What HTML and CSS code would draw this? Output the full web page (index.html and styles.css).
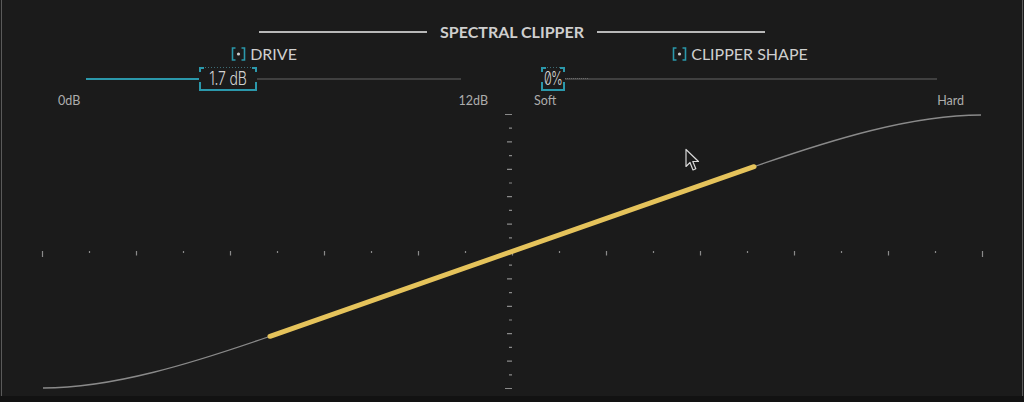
FILE: index.html
```html
<!DOCTYPE html>
<html lang="en">
<head>
    <meta charset="UTF-8">
    <meta name="viewport" content="width=device-width, initial-scale=1.0">
    <title>Spectral Clipper</title>
    <link rel="stylesheet" href="styles.css">
</head>
<body>
    <div class="panel">
        <div class="title-row">
            <span class="rule"></span>
            <h1 class="title">SPECTRAL CLIPPER</h1>
            <span class="rule"></span>
        </div>

        <div class="controls">
            <div class="control">
                <div class="control-label">
                    <svg class="link-icon" width="15" height="14" viewBox="0 0 15 14">
                        <path d="M4.5 1H1.5V13H4.5M10.5 1H13.5V13H10.5" fill="none" stroke="#2b98ab" stroke-width="1.6"/>
                        <circle cx="7.5" cy="7" r="1.6" fill="#cfcfcf"/>
                    </svg>
                    <span>DRIVE</span>
                </div>
                <div class="slider">
                    <div class="track"></div>
                    <div class="fill" style="width: 113px;"></div>
                    <div class="thumb" style="left: 141px; width: 58px;"><span class="value">1.7 dB</span></div>
                </div>
                <div class="scale"><span>0dB</span><span>12dB</span></div>
            </div>

            <div class="control">
                <div class="control-label">
                    <svg class="link-icon" width="15" height="14" viewBox="0 0 15 14">
                        <path d="M4.5 1H1.5V13H4.5M10.5 1H13.5V13H10.5" fill="none" stroke="#2b98ab" stroke-width="1.6"/>
                        <circle cx="7.5" cy="7" r="1.6" fill="#cfcfcf"/>
                    </svg>
                    <span>CLIPPER SHAPE</span>
                </div>
                <div class="slider">
                    <div class="track"></div>
                    <div class="hover-trail"></div>
                    <div class="thumb" style="left: 7px; width: 24px;"><span class="value value-small">0%</span></div>
                </div>
                <div class="scale"><span>Soft</span><span>Hard</span></div>
            </div>
        </div>

        <svg class="graph" width="1020" height="288" viewBox="2 108 1020 288">
            <path id="ticks" d="" fill="none" stroke="#8a8a8a" stroke-width="1.2"/>
            <path class="curve" d="M43 388C113 388 193 363 268 337L756 166C831 140 911 115 981 115"/>
            <line class="active" x1="270" y1="336.3" x2="754" y2="166.7"/>
            <path class="cursor" d="M686 149.5V166.5L690 162.5L693 170L695.8 168.8L692.8 161.5L698.5 161.5Z"/>
        </svg>
    </div>
    <div class="base"></div>

    <script>
        var d = '';
        for (var k = 0; k <= 20; k++) {
            var end = k === 0 || k === 20;
            var x = 42.5 + k * 47;
            var h = end ? 6 : (k % 2 === 0 ? 4.5 : 2);
            d += 'M' + x + ' 251V' + (251 + h);

            var y = 114.5 + k * 13.7;
            var w = end ? 7 : (k % 2 === 0 ? 5 : 3);
            d += 'M' + (512 - w) + ' ' + y.toFixed(1) + 'H512';
        }
        document.getElementById('ticks').setAttribute('d', d);
    </script>
</body>
</html>
```

FILE: styles.css
```css
body {
    margin: 0;
    background-color: #1b1b1b;
    font-family: 'Lato', 'Open Sans', sans-serif;
    color: #cfcfcf;
}

.panel {
    height: 396px;
    margin: 0 1px;
    border-left: 1px solid #5a5a5a;
    border-right: 1px solid #5a5a5a;
    padding-top: 22px;
    box-sizing: border-box;
    overflow: hidden;
}

.base {
    height: 6px;
    background-color: #121212;
}

.title-row {
    display: flex;
    align-items: center;
    justify-content: center;
    gap: 13px;
    height: 20px;
}

.rule {
    width: 168px;
    height: 1.5px;
    background-color: #b8b8b8;
}

.title {
    margin: 0;
    font-size: 16px;
    font-weight: 700;
    line-height: 20px;
    color: #cfcfcf;
}

.controls {
    display: flex;
    gap: 46px;
    padding-left: 56px;
    margin-top: 2px;
}

.control {
    width: 430px;
}

.control-label {
    display: flex;
    align-items: center;
    justify-content: center;
    gap: 4px;
    height: 20px;
    padding-right: 18px;
    font-size: 16px;
    line-height: 20px;
    color: #cfcfcf;
}

.link-icon {
    display: block;
}

.slider {
    position: relative;
    height: 24px;
    margin-top: 3px;
}

.track {
    position: absolute;
    left: 28px;
    right: 27px;
    top: 11px;
    height: 1.5px;
    background-color: #404040;
}

.fill {
    position: absolute;
    left: 28px;
    top: 11px;
    height: 2px;
    background-color: #2b98ab;
}

.hover-trail {
    position: absolute;
    left: 31px;
    top: 11px;
    width: 24px;
    height: 1px;
    background: repeating-linear-gradient(90deg, #6a6a6a 0 1px, transparent 1px 2px);
}

.thumb {
    position: absolute;
    top: 0;
    height: 24px;
    box-sizing: border-box;
    display: flex;
    align-items: center;
    justify-content: center;
    background:
        linear-gradient(#2b98ab, #2b98ab) left top / 5px 2px no-repeat,
        linear-gradient(#2b98ab, #2b98ab) right top / 5px 2px no-repeat,
        linear-gradient(#2b98ab, #2b98ab) left top / 2px 5px no-repeat,
        linear-gradient(#2b98ab, #2b98ab) right top / 2px 5px no-repeat,
        linear-gradient(#2b98ab, #2b98ab) left bottom / 2px 9px no-repeat,
        linear-gradient(#2b98ab, #2b98ab) right bottom / 2px 9px no-repeat,
        linear-gradient(#2b98ab, #2b98ab) left bottom / 100% 2px no-repeat,
        repeating-linear-gradient(90deg, #3d6c75 0 1px, transparent 1px 3px) center top / 100% 1px no-repeat,
        #1b1b1b;
}

.value {
    display: inline-block;
    font-family: 'Inter', 'Roboto', sans-serif;
    font-size: 18px;
    font-weight: 300;
    line-height: 1;
    letter-spacing: -0.3px;
    font-variant-numeric: slashed-zero;
    color: #d2d2d2;
    transform: scaleX(0.78);
    white-space: nowrap;
}

.value-small {
    transform: scaleX(0.7);
    letter-spacing: -1px;
}

.scale {
    display: flex;
    justify-content: space-between;
    margin-top: 3px;
    font-size: 12.5px;
    font-weight: 400;
    line-height: 14px;
    color: #adadad;
}

.graph {
    display: block;
}

.curve {
    fill: none;
    stroke: #8a8a8a;
    stroke-width: 1.3;
}

.active {
    stroke: #e5c35b;
    stroke-width: 5;
    stroke-linecap: round;
}

.cursor {
    fill: #1b1b1b;
    stroke: #d8d8d8;
    stroke-width: 1.2;
    stroke-linejoin: round;
}
```
